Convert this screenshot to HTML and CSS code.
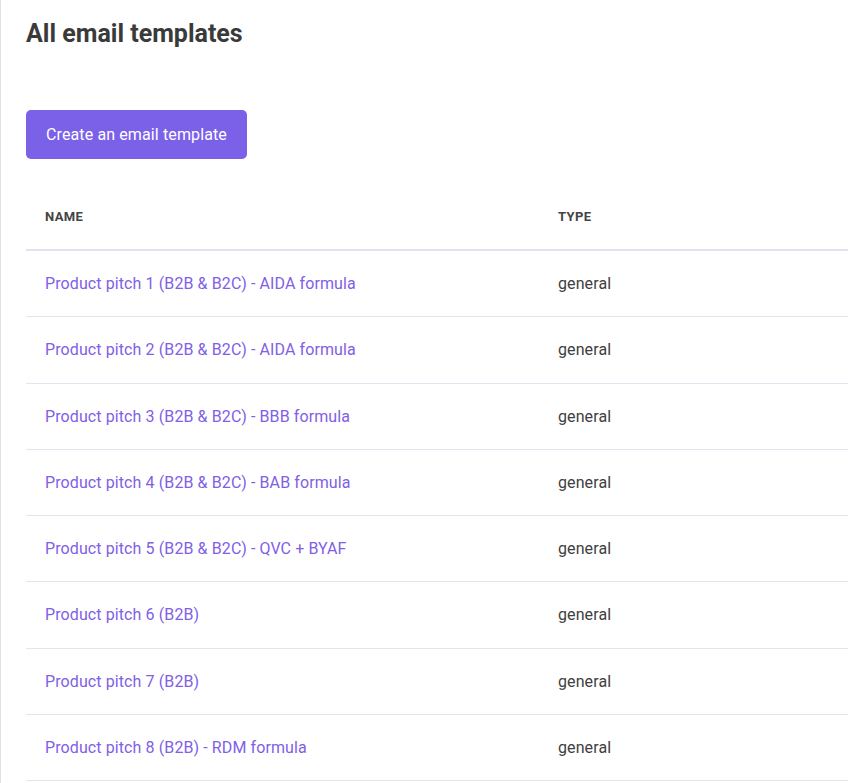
FILE: index.html
```html
<!DOCTYPE html>
<html>
<head>
<meta charset="utf-8">
<link rel="stylesheet" href="styles.css">
</head>
<body>
<div class="page">
  <h1 class="title">All email templates</h1>
  <button class="btn">Create an email template</button>
  <table class="tbl">
    <colgroup><col class="col-name"><col class="col-type"></colgroup>
    <thead>
      <tr><th>Name</th><th>Type</th></tr>
    </thead>
    <tbody>
      <tr><td><a href="#">Product pitch 1 (B2B &amp; B2C) - AIDA formula</a></td><td>general</td></tr>
      <tr><td><a href="#">Product pitch 2 (B2B &amp; B2C) - AIDA formula</a></td><td>general</td></tr>
      <tr><td><a href="#">Product pitch 3 (B2B &amp; B2C) - BBB formula</a></td><td>general</td></tr>
      <tr><td><a href="#">Product pitch 4 (B2B &amp; B2C) - BAB formula</a></td><td>general</td></tr>
      <tr><td><a href="#">Product pitch 5 (B2B &amp; B2C) - QVC + BYAF</a></td><td>general</td></tr>
      <tr><td><a href="#">Product pitch 6 (B2B)</a></td><td>general</td></tr>
      <tr><td><a href="#">Product pitch 7 (B2B)</a></td><td>general</td></tr>
      <tr><td><a href="#">Product pitch 8 (B2B) - RDM formula</a></td><td>general</td></tr>
    </tbody>
  </table>
</div>
</body>
</html>
```

FILE: styles.css
```css
html, body {
  margin: 0;
  padding: 0;
  background: #ffffff;
  overflow: hidden;
}
body {
  font-family: Roboto, "Liberation Sans", Arial, sans-serif;
}
.page {
  border-left: 1px solid #e2e2e2;
  padding-left: 25px;
  height: 783px;
  box-sizing: border-box;
}
.title {
  margin: 0;
  padding-top: 19px;
  font-size: 25px;
  line-height: 30px;
  font-weight: 700;
  color: #3a3a3a;
}
.btn {
  display: block;
  margin-top: 61px;
  height: 49px;
  padding: 0 20px;
  border: none;
  border-radius: 5px;
  background: #7b61e8;
  color: #ffffff;
  font-family: Roboto, "Liberation Sans", Arial, sans-serif;
  font-size: 16px;
  letter-spacing: 0.12px;
  cursor: pointer;
}
.tbl {
  margin-top: 25px;
  width: 822px;
  table-layout: fixed;
  border-collapse: collapse;
}
.col-name {
  width: 513px;
}
.tbl th {
  text-align: left;
  text-transform: uppercase;
  font-size: 13px;
  font-weight: 700;
  color: #444444;
  padding: 0 19px;
  height: 65px;
  border-bottom: 2px solid #e3e1f3;
  letter-spacing: 0.4px;
}
.tbl td {
  padding: 0 19px;
  height: 65.25px;
  border-bottom: 1px solid #e5e3ef;
  font-size: 16px;
  letter-spacing: 0.1px;
  color: #404040;
}
.tbl a {
  color: #8160e6;
  text-decoration: none;
}
```
